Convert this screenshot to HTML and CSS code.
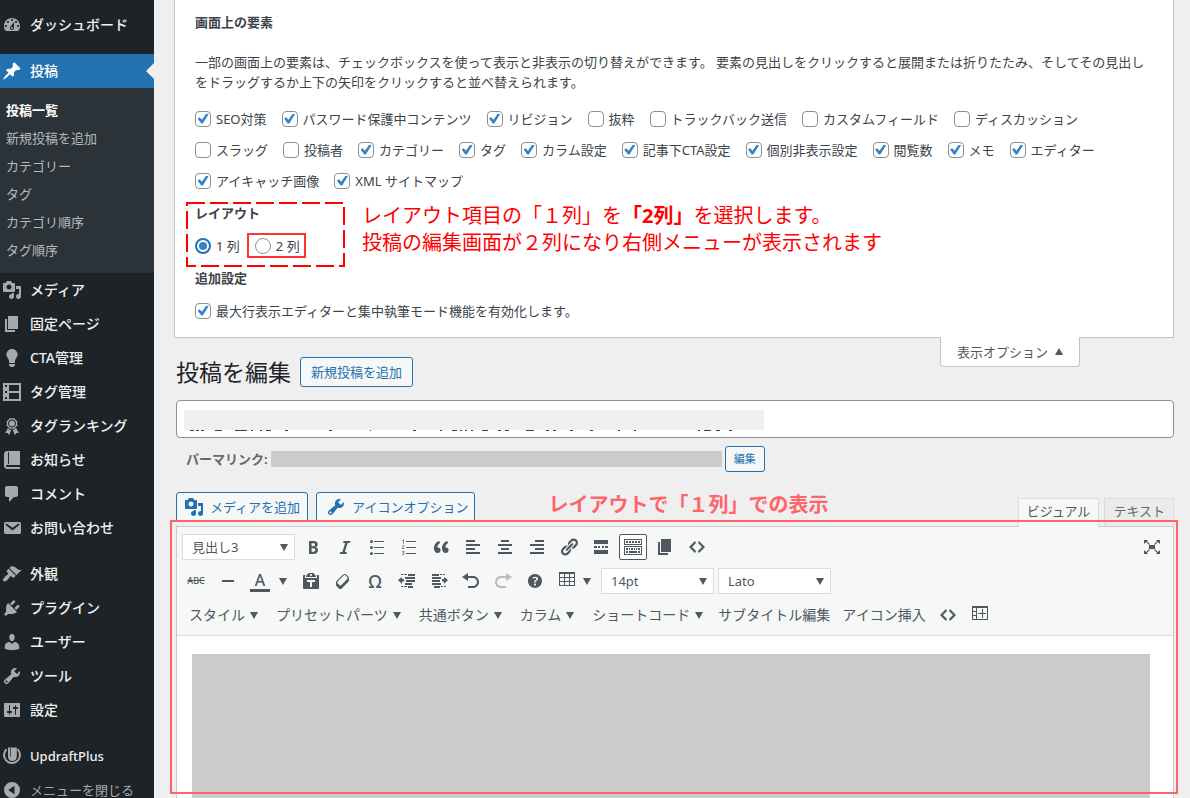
FILE: index.html
```html
<!DOCTYPE html>
<html lang="ja">
<head>
<meta charset="utf-8">
<title>投稿を編集</title>
<meta name="viewport" content="width=device-width, initial-scale=1">
<link rel="stylesheet" href="styles.css">
</head>
<body>
<svg class="sprite" aria-hidden="true">
  <symbol id="dashboard" viewBox="0 0 20 20"><path d="M3.76 16h12.48c1.1-1.37 1.76-3.11 1.76-5 0-4.42-3.58-8-8-8s-8 3.58-8 8c0 1.89.66 3.63 1.76 5zM10 4c.55 0 1 .45 1 1s-.45 1-1 1-1-.45-1-1 .45-1 1-1zM6 6c.55 0 1 .45 1 1s-.45 1-1 1-1-.45-1-1 .45-1 1-1zm8 0c.55 0 1 .45 1 1s-.45 1-1 1-1-.45-1-1 .45-1 1-1zm-5.37 5.55L12 7v6c0 1.1-.9 2-2 2s-2-.9-2-2c0-.57.24-1.08.63-1.45zM4 10c.55 0 1 .45 1 1s-.45 1-1 1-1-.45-1-1 .45-1 1-1zm12 0c.55 0 1 .45 1 1s-.45 1-1 1-1-.45-1-1 .45-1 1-1zm-5 3c0-.55-.45-1-1-1s-1 .45-1 1 .45 1 1 1 1-.45 1-1z"/></symbol>
  <symbol id="pin" viewBox="0 0 20 20"><path d="M10.44 3.02l1.82-1.82 6.36 6.35-1.83 1.82c-1.05-.68-2.48-.57-3.41.36l-.75.75c-.92.93-1.04 2.35-.35 3.41l-1.83 1.82-2.41-2.41-2.8 2.79c-.42.42-3.38 2.71-3.8 2.29s1.86-3.39 2.28-3.81l2.79-2.79L4.1 9.36l1.83-1.82c1.05.69 2.48.57 3.4-.36l.75-.75c.93-.92 1.05-2.35.36-3.41z"/></symbol>
  <symbol id="media" viewBox="0 0 20 20"><path d="M13 11V4c0-.55-.45-1-1-1h-1.67L9 1H5L3.67 3H2c-.55 0-1 .45-1 1v7c0 .55.45 1 1 1h10c.55 0 1-.45 1-1zM7 4.5c1.38 0 2.5 1.12 2.5 2.5S8.38 9.5 7 9.5 4.5 8.38 4.5 7 5.62 4.5 7 4.5zM14 6h5v10.5c0 1.38-1.12 2.5-2.5 2.5S14 17.88 14 16.5s1.12-2.5 2.5-2.5c.17 0 .34.02.5.05V9h-3V6zm-4 8.05V13h2v3.5c0 1.38-1.12 2.5-2.5 2.5S7 17.88 7 16.5 8.12 14 9.5 14c.17 0 .34.02.5.05z"/></symbol>
  <symbol id="page" viewBox="0 0 20 20"><path d="M6 15V2h10v13H6zm-1 1h8v2H3V5h2v11z"/></symbol>
  <symbol id="bulb" viewBox="0 0 20 20"><path d="M10 1c3.11 0 5.63 2.52 5.63 5.62 0 1.84-2.03 4.58-2.03 4.58-.33.44-.6 1.25-.6 1.8v1c0 .55-.45 1-1 1H8c-.55 0-1-.45-1-1v-1c0-.55-.27-1.36-.6-1.8 0 0-2.02-2.74-2.02-4.58C4.38 3.52 6.89 1 10 1zM7 16.87V16h6v.87c0 .62-.13 1.13-.75 1.13H12c0 .62-.4 1-1.02 1h-2c-.61 0-.98-.38-.98-1h-.25c-.62 0-.75-.51-.75-1.13z"/></symbol>
  <symbol id="frames" viewBox="0 0 20 20"><path fill-rule="evenodd" d="M1 1h18v18H1zM7 3v6h10V3zM7 11v6h10v-6zM3 3v2h2V3zM3 9v2h2V9zM3 15v2h2v-2z"/></symbol>
  <symbol id="award" viewBox="0 0 20 20"><path d="M4.46 5.16L5 7.46l-.54 2.29 2.01 1.24L7.7 13l2.3-.54 2.3.54 1.23-2.01 2.01-1.24L15 7.46l.54-2.3-2-1.24-1.24-2.01-2.3.55-2.29-.54-1.25 2zm5.55 6.34c-2.21 0-4-1.79-4-4 0-2.2 1.79-4 4-4 2.2 0 4 1.8 4 4 0 2.21-1.8 4-4 4zm-.02-1C8.33 10.5 7 9.16 7 7.5c0-1.65 1.33-3 2.99-3S13 5.85 13 7.5c0 1.66-1.35 3-3.01 3zm3.84 1.1l-1.28 2.24-2.08-.47L13 19.2l1.4-2.2h2.5zm-7.7.07l1.25 2.25 2.13-.51L7 19.2 5.6 17H3.1z"/></symbol>
  <symbol id="book" viewBox="0 0 20 20"><path d="M5 17h13v2H5c-1.66 0-3-1.34-3-3V4c0-1.66 1.34-3 3-3h13v14H5c-.55 0-1 .45-1 1s.45 1 1 1zm2-3.5v-11c0-.28-.22-.5-.5-.5s-.5.22-.5.5v11c0 .28.22.5.5.5s.5-.22.5-.5z"/></symbol>
  <symbol id="comment" viewBox="0 0 20 20"><path d="M5 2h9c1.1 0 2 .9 2 2v7c0 1.1-.9 2-2 2h-2l-5 5v-5H5c-1.1 0-2-.9-2-2V4c0-1.1.9-2 2-2z"/></symbol>
  <symbol id="mail" viewBox="0 0 20 20"><path d="M3.87 4h13.25C18.37 4 19 4.59 19 5.79v8.42c0 1.19-.63 1.79-1.88 1.79H3.87c-1.25 0-1.88-.6-1.88-1.79V5.79c0-1.2.63-1.79 1.88-1.79zm6.62 8.6l6.74-5.53c.24-.2.43-.66.13-1.07-.29-.41-.82-.42-1.17-.17l-5.7 3.86L4.8 5.83c-.35-.25-.88-.24-1.17.17-.3.41-.11.87.13 1.07z"/></symbol>
  <symbol id="brush" viewBox="0 0 20 20"><path d="M14.48 11.06L7.41 3.99l1.5-1.5c.5-.56 2.3-.47 3.51.32 1.21.8 1.43 1.28 2.91 2.1 1.18.64 2.45 1.26 4.45.85zm-.71.71L6.7 4.7 4.93 6.47c-.39.39-.39 1.02 0 1.41l1.06 1.06c.39.39.39 1.03 0 1.42-.6.6-1.43 1.11-2.21 1.69-.35.26-.7.53-1.01.84C1.43 14.23.4 16.08 1.4 17.07c.99 1 2.84-.03 4.18-1.36.31-.31.58-.66.85-1.02.57-.78 1.08-1.61 1.69-2.21.39-.39 1.02-.39 1.41 0l1.06 1.06c.39.39 1.02.39 1.41 0z"/></symbol>
  <symbol id="plug" viewBox="0 0 20 20"><path d="M13.11 4.36L9.87 7.6 8 5.73l3.24-3.24c.35-.34 1.05-.2 1.56.32.52.51.66 1.21.31 1.55zm-8 1.77l.91-1.12 9.01 9.01-1.19.84c-.71.71-2.63 1.16-3.82 1.16H6.14L4.9 17.26c-.59.59-1.54.59-2.12 0-.59-.58-.59-1.53 0-2.12l1.24-1.24v-3.88c0-1.13.4-3.19 1.09-3.89zm7.26 3.97l3.24-3.24c.34-.35 1.04-.21 1.55.31.52.51.66 1.21.31 1.55l-3.24 3.25z"/></symbol>
  <symbol id="user" viewBox="0 0 20 20"><path d="M10 9.25c-2.27 0-2.73-3.44-2.73-3.44C7 4.02 7.82 2 9.97 2c2.16 0 2.98 2.02 2.71 3.81 0 0-.41 3.44-2.68 3.44zm0 2.57L12.72 10c2.39 0 4.52 2.33 4.52 4.53v2.49s-3.65 1.13-7.24 1.13c-3.65 0-7.24-1.13-7.24-1.13v-2.49c0-2.25 1.94-4.48 4.47-4.48z"/></symbol>
  <symbol id="wrench" viewBox="0 0 20 20"><path d="M16.68 9.77c-1.34 1.34-3.3 1.67-4.95.99l-5.41 6.52c-.99.99-2.59.99-3.58 0s-.99-2.59 0-3.57l6.52-5.42c-.68-1.65-.35-3.61.99-4.95 1.28-1.28 3.12-1.62 4.72-1.06l-2.89 2.89 2.82 2.82 2.86-2.87c.53 1.58.18 3.39-1.08 4.65zM3.81 16.21c.4.39 1.04.39 1.43 0 .4-.4.4-1.04 0-1.43-.39-.4-1.03-.4-1.43 0-.39.39-.39 1.03 0 1.43z"/></symbol>
  <symbol id="sliders" viewBox="0 0 20 20"><path d="M18 16V4c0-.55-.45-1-1-1H3c-.55 0-1 .45-1 1v12c0 .55.45 1 1 1h14c.55 0 1-.45 1-1zM8 11h1c.55 0 1 .45 1 1s-.45 1-1 1H8v1.5c0 .28-.22.5-.5.5s-.5-.22-.5-.5V13H6c-.55 0-1-.45-1-1s.45-1 1-1h1V5.5c0-.28.22-.5.5-.5s.5.22.5.5V11zm5-2h-1c-.55 0-1-.45-1-1s.45-1 1-1h1V5.500c0-.28.22-.5.5-.5s.5.22.5.5V7h1c.55 0 1 .45 1 1s-.45 1-1 1h-1v5.500c0 .28-.22.5-.5.5s-.5-.22-.5-.5V9z"/></symbol>
  <symbol id="updraft" viewBox="0 0 20 20"><path d="M4.500 3.200A8 8 0 1 0 15.500 3.200" fill="none" stroke="currentColor" stroke-width="2"/><path fill-rule="evenodd" d="M6 1.500h8.800v9.300c0 5.700-8.800 5.700-8.800 0zM8 2v8.500c0 .8.700.8.700 0V2z"/></symbol>
  <symbol id="collapse" viewBox="0 0 20 20"><path fill-rule="evenodd" d="M10 2a8 8 0 1 0 0 16 8 8 0 1 0 0-16zM12.500 5.800v8.400L6.300 10z"/></symbol>

  <symbol id="bold" viewBox="0 0 20 20"><path d="M6 4v13h4.540c1.370 0 2.460-.33 3.260-1 .8-.66 1.200-1.580 1.200-2.770 0-.84-.17-1.510-.51-2.010s-.9-.85-1.670-1.030v-.09c.57-.1 1.020-.4 1.360-.9s.51-1.130.51-1.910c0-1.140-.39-1.980-1.170-2.500C12.750 4.260 11.500 4 9.780 4H6zm2.570 5.150V6.260h1.360c.73 0 1.270.11 1.610.32.34.22.51.58.51 1.070 0 .54-.16.92-.47 1.150s-.82.35-1.510.35h-1.500zm0 2.190h1.600c1.440 0 2.160.53 2.160 1.610 0 .6-.17 1.050-.51 1.340s-.86.43-1.570.43H8.570v-3.380z"/></symbol>
  <symbol id="italic" viewBox="0 0 20 20"><path d="M14.780 6h-2.130l-2.800 9h2.120l-.62 2H4.600l.62-2h2.140l2.800-9H8.030l.62-2h6.750z"/></symbol>
  <symbol id="ul" viewBox="0 0 20 20"><path d="M7 4h10v1H7zM7 10h10v1H7zM7 16h10v1H7z"/><circle cx="4.500" cy="4.500" r="1.500"/><circle cx="4.500" cy="10.500" r="1.500"/><circle cx="4.500" cy="16.500" r="1.500"/></symbol>
  <symbol id="ol" viewBox="0 0 20 20"><path d="M7 4h10v1H7zM7 10h10v1H7zM7 16h10v1H7z"/><path d="M3.500 3.500l1-.7V6.500M3.300 8.900c.5-.8 1.900-.6 1.700.4-.1.600-1.700 1.600-1.700 2.200h2M3.300 14.600h1.800l-1 1.400c1.700 0 1.400 2.200-.9 1.600" fill="none" stroke="currentColor" stroke-width=".8"/></symbol>
  <symbol id="quote" viewBox="0 0 20 20"><path d="M9.490 13.220c0-.74-.2-1.380-.61-1.900-.62-.78-1.830-.88-2.530-.72-.29-1.650 1.110-3.750 2.920-4.650L7.880 4c-2.730 1.300-5.420 4.280-4.960 8.050C3.210 14.430 4.590 16 6.540 16c.85 0 1.560-.25 2.120-.75s.83-1.180.83-2.030zm8.050 0c0-.74-.2-1.380-.61-1.900-.63-.78-1.830-.88-2.530-.72-.29-1.650 1.110-3.750 2.920-4.650L15.930 4c-2.730 1.300-5.410 4.280-4.950 8.050.29 2.380 1.660 3.950 3.610 3.950.85 0 1.560-.25 2.120-.75s.83-1.180.83-2.030z"/></symbol>
  <symbol id="left" viewBox="0 0 20 20"><path d="M3 3h9v2H3zM3 7h14v2H3zM3 11h9v2H3zM3 15h14v2H3z"/></symbol>
  <symbol id="center" viewBox="0 0 20 20"><path d="M6 3h8v2H6zM3 7h14v2H3zM6 11h8v2H6zM3 15h14v2H3z"/></symbol>
  <symbol id="right" viewBox="0 0 20 20"><path d="M8 3h9v2H8zM3 7h14v2H3zM8 11h9v2H8zM3 15h14v2H3z"/></symbol>
  <symbol id="link" viewBox="0 0 20 20"><path d="M17.740 2.760c1.680 1.690 1.680 4.410 0 6.100l-1.530 1.520c-1.120 1.120-2.700 1.470-4.140 1.090l2.620-2.610.76-.77.76-.76c.84-.84.84-2.200 0-3.040-.84-.85-2.200-.85-3.040 0l-.77.76-3.380 3.380c-.37-1.440-.02-3.020 1.100-4.140l1.520-1.530c1.690-1.680 4.420-1.680 6.100 0zM8.590 13.430l5.340-5.340c.42-.42.42-1.100 0-1.520-.44-.43-1.130-.39-1.530 0l-5.330 5.340c-.42.42-.42 1.100 0 1.520.44.43 1.130.39 1.520 0zm-.76 2.290l4.140-4.150c.38 1.440.03 3.020-1.090 4.140l-1.520 1.530c-1.690 1.680-4.410 1.680-6.100 0-1.680-1.680-1.680-4.420 0-6.100l1.530-1.520c1.120-1.120 2.700-1.470 4.140-1.100l-4.140 4.150c-.85.84-.85 2.200 0 3.050.84.84 2.200.84 3.040 0z"/></symbol>
  <symbol id="more" viewBox="0 0 20 20"><path d="M3 3h14v4H3zM3 9h3v2H3zM7 9h2v2H7zM11 9h2v2h-2zM14 9h3v2h-3zM3 13h14v4H3z"/></symbol>
  <symbol id="keyboard" viewBox="0 0 20 20"><path fill-rule="evenodd" d="M1 2h18v6H1zM2 3v4h16V3zM1 9h18v9H1zM2 10v7h16v-7z"/><path d="M3 4h2v2H3zM6 4h2v2H6zM9 4h2v2H9zM12 4h2v2h-2zM15 4h2v2h-2zM3 11h2v2H3zM6 11h1v2H6zM8 11h2v2H8zM11 11h1v2h-1zM13 11h1v2h-1zM15 11h2v2h-2zM3 14h2v2H3zM6 14h8v2H6zM15 14h2v2h-2z"/></symbol>
  <symbol id="code" viewBox="0 0 20 20"><path d="M9 6l-4 4 4 4-1 2-6-6 6-6zm2 8l4-4-4-4 1-2 6 6-6 6z"/></symbol>
  <symbol id="expand" viewBox="0 0 20 20"><path d="M7 8h6v4H7zM2 3h4L4.900 4.200l3 2.900-.8.8-3-2.900L2 7zM18 3h-4l1.100 1.200-3 2.900.8.800 3-2.900L18 7zM2 17h4l-1.100-1.200 3-2.900-.8-.8-3 2.900L2 13zM18 17h-4l1.100-1.200-3-2.900.8-.8 3 2.900L18 13z"/></symbol>
  <symbol id="minus" viewBox="0 0 20 20"><path d="M4 9h12v2H4z"/></symbol>
  <symbol id="paste" viewBox="0 0 20 20"><path d="M12.380 2L15 5v1H5V5l2.640-3h4.740zM10 5c.55 0 1-.44 1-1 0-.55-.45-1-1-1s-1 .45-1 1c0 .56.45 1 1 1zm5.450-1H17c.55 0 1 .45 1 1v12c0 .56-.45 1-1 1H3c-.55 0-1-.44-1-1V5c0-.55.45-1 1-1h1.550L4 4.630V7h12V4.630zM14 11V9H6v2h3v5h2v-5h3z"/></symbol>
  <symbol id="eraser" viewBox="0 0 20 20"><path d="M14.290 4.590l1.100 1.110c.41.4.61.94.61 1.470v2.120c0 .53-.2 1.070-.61 1.470l-6.630 6.630c-.4.41-.94.61-1.470.61s-1.070-.2-1.470-.61l-1.110-1.100-1.100-1.110c-.41-.4-.61-.94-.61-1.470v-2.120c0-.54.2-1.070.61-1.480l6.630-6.620c.4-.41.94-.61 1.470-.61s1.060.2 1.470.61zm-6.210 9.700l6.420-6.420c.39-.39.39-1.030 0-1.430L12.360 4.300c-.19-.19-.45-.29-.72-.29s-.52.1-.71.29l-6.420 6.420c-.39.4-.39 1.040 0 1.430l2.140 2.140c.38.38 1.040.38 1.430 0z"/></symbol>
  <symbol id="outdent" viewBox="0 0 20 20"><path d="M7 3h3v1H7zM11 3h7v2h-7zM4 3h2v1H4zM8 6h10v2H8zM9 9h9v2H9zM8 12h7v2H8zM4 15h2v1H4zM7 15h3v1H7zM11 15h5v2h-5zM1 9l4-3v2h2v2.500H5V13z"/></symbol>
  <symbol id="indent" viewBox="0 0 20 20"><path d="M3 3h7v2H3zM11 3h2v1h-2zM14 3h2v1h-2zM3 6h9v2H3zM3 9h8v2H3zM3 12h9v2H3zM5 15h6v2H5zM12 15h2v1h-2zM15 15h2v1h-2zM19 9l-4-3v2h-2v2.500h2V13z"/></symbol>
  <symbol id="undo" viewBox="0 0 20 20"><path d="M12 5H7V2L1 6l6 4V7h5c2.200 0 4 1.800 4 4s-1.800 4-4 4H7v2h5c3.300 0 6-2.700 6-6s-2.700-6-6-6z"/></symbol>
  <symbol id="redo" viewBox="0 0 20 20"><path d="M8 5h5V2l6 4-6 4V7H8c-2.200 0-4 1.800-4 4s1.800 4 4 4h5v2H8c-3.300 0-6-2.700-6-6s2.700-6 6-6z"/></symbol>
  <symbol id="help" viewBox="0 0 20 20"><path d="M17 10c0-3.870-3.140-7-7-7-3.870 0-7 3.130-7 7s3.130 7 7 7c3.860 0 7-3.130 7-7zm-6.300 1.480H9.140v-.43c0-.38.08-.7.24-.98s.46-.57.88-.89c.41-.29.68-.53.81-.71.14-.18.2-.39.2-.62 0-.25-.09-.44-.28-.58-.19-.13-.45-.19-.79-.19-.58 0-1.250.19-2 .57l-.64-1.280c.87-.49 1.800-.74 2.770-.74.81 0 1.450.2 1.920.58.48.39.71.91.71 1.550 0 .43-.09.8-.29 1.110-.19.32-.57.67-1.110 1.060-.38.28-.61.49-.71.63-.1.15-.15.34-.15.57v.35zm-1.470 2.740c-.18-.17-.27-.42-.27-.73 0-.33.08-.58.26-.75s.43-.25.77-.25c.32 0 .57.09.75.26s.27.42.27.74c0 .3-.09.55-.27.72-.18.18-.43.27-.75.27-.33 0-.58-.09-.76-.26z"/></symbol>
  <symbol id="table" viewBox="0 0 20 20"><path fill-rule="evenodd" d="M2 1h16v14H2zM3 3v3h4V3zM8 3v3h4V3zM13 3v3h4V3zM3 7v3h4V7zM8 7v3h4V7zM13 7v3h4V7zM3 11v3h4v-3zM8 11v3h4v-3zM13 11v3h4v-3z"/></symbol>
  <symbol id="addtable" viewBox="0 0 20 20"><path fill-rule="evenodd" d="M2 1h16v14H2zM3 3v3h3V3zM3 7v3h3V7zM3 11v3h3v-3zM7 3v11h10V3z"/><path d="M8 8h8v1H8zM12 4h1v9h-1z"/></symbol>
</svg>

<div class="shell">
  <nav class="menu" aria-label="メインメニュー">
    <ul class="menu-list">
      <li><a class="menu-link" href="#"><svg class="icon"><use href="#dashboard"/></svg>ダッシュボード</a></li>
      <li class="menu-group">
        <a class="menu-link current" href="#"><svg class="icon"><use href="#pin"/></svg>投稿</a>
        <ul class="submenu">
          <li><a class="submenu-link active" href="#">投稿一覧</a></li>
          <li><a class="submenu-link" href="#">新規投稿を追加</a></li>
          <li><a class="submenu-link" href="#">カテゴリー</a></li>
          <li><a class="submenu-link" href="#">タグ</a></li>
          <li><a class="submenu-link" href="#">カテゴリ順序</a></li>
          <li><a class="submenu-link" href="#">タグ順序</a></li>
        </ul>
      </li>
      <li><a class="menu-link" href="#"><svg class="icon"><use href="#media"/></svg>メディア</a></li>
      <li><a class="menu-link" href="#"><svg class="icon"><use href="#page"/></svg>固定ページ</a></li>
      <li><a class="menu-link" href="#"><svg class="icon"><use href="#bulb"/></svg>CTA管理</a></li>
      <li><a class="menu-link" href="#"><svg class="icon"><use href="#frames"/></svg>タグ管理</a></li>
      <li><a class="menu-link" href="#"><svg class="icon"><use href="#award"/></svg>タグランキング</a></li>
      <li><a class="menu-link" href="#"><svg class="icon"><use href="#book"/></svg>お知らせ</a></li>
      <li><a class="menu-link" href="#"><svg class="icon"><use href="#comment"/></svg>コメント</a></li>
      <li><a class="menu-link" href="#"><svg class="icon"><use href="#mail"/></svg>お問い合わせ</a></li>
      <li class="menu-group"><a class="menu-link" href="#"><svg class="icon"><use href="#brush"/></svg>外観</a></li>
      <li><a class="menu-link" href="#"><svg class="icon"><use href="#plug"/></svg>プラグイン</a></li>
      <li><a class="menu-link" href="#"><svg class="icon"><use href="#user"/></svg>ユーザー</a></li>
      <li><a class="menu-link" href="#"><svg class="icon"><use href="#wrench"/></svg>ツール</a></li>
      <li><a class="menu-link" href="#"><svg class="icon"><use href="#sliders"/></svg>設定</a></li>
      <li class="menu-group"><a class="menu-link latin" href="#"><svg class="icon"><use href="#updraft"/></svg>UpdraftPlus</a></li>
      <li><button class="menu-link collapse" type="button"><svg class="icon"><use href="#collapse"/></svg>メニューを閉じる</button></li>
    </ul>
  </nav>

  <main class="main">
    <section class="options">
      <h2 class="options-title">画面上の要素</h2>
      <p class="options-text">一部の画面上の要素は、チェックボックスを使って表示と非表示の切り替えができます。 要素の見出しをクリックすると展開または折りたたみ、そしてその見出しをドラッグするか上下の矢印をクリックすると並べ替えられます。</p>
      <div class="choices">
        <label class="choice"><input class="check" type="checkbox" checked>SEO対策</label>
        <label class="choice"><input class="check" type="checkbox" checked>パスワード保護中コンテンツ</label>
        <label class="choice"><input class="check" type="checkbox" checked>リビジョン</label>
        <label class="choice"><input class="check" type="checkbox">抜粋</label>
        <label class="choice"><input class="check" type="checkbox">トラックバック送信</label>
        <label class="choice"><input class="check" type="checkbox">カスタムフィールド</label>
        <label class="choice"><input class="check" type="checkbox">ディスカッション</label>
        <label class="choice"><input class="check" type="checkbox">スラッグ</label>
        <label class="choice"><input class="check" type="checkbox">投稿者</label>
        <label class="choice"><input class="check" type="checkbox" checked>カテゴリー</label>
        <label class="choice"><input class="check" type="checkbox" checked>タグ</label>
        <label class="choice"><input class="check" type="checkbox" checked>カラム設定</label>
        <label class="choice"><input class="check" type="checkbox" checked>記事下CTA設定</label>
        <label class="choice"><input class="check" type="checkbox" checked>個別非表示設定</label>
        <label class="choice"><input class="check" type="checkbox" checked>閲覧数</label>
        <label class="choice"><input class="check" type="checkbox" checked>メモ</label>
        <label class="choice"><input class="check" type="checkbox" checked>エディター</label>
        <label class="choice"><input class="check" type="checkbox" checked>アイキャッチ画像</label>
        <label class="choice"><input class="check" type="checkbox" checked>XML サイトマップ</label>
      </div>
      <div class="layout">
        <h2 class="options-title">レイアウト</h2>
        <div class="choices">
          <label class="choice"><input class="radio" type="radio" name="columns" checked>1 列</label>
          <label class="choice marked"><input class="radio" type="radio" name="columns">2 列</label>
        </div>
        <svg class="dashes" aria-hidden="true"><rect x="1" y="1" width="157" height="63"/></svg>
        <p class="note">レイアウト項目の「１列」を<b>「2列」</b>を選択します。<br>投稿の編集画面が２列になり右側メニューが表示されます</p>
      </div>
      <h2 class="options-title">追加設定</h2>
      <div class="choices">
        <label class="choice"><input class="check" type="checkbox" checked>最大行表示エディターと集中執筆モード機能を有効化します。</label>
      </div>
    </section>

    <div class="heading">
      <div class="heading-title">
        <h1 class="title">投稿を編集</h1>
        <a class="btn" href="#">新規投稿を追加</a>
      </div>
      <button class="options-toggle" type="button">表示オプション<span class="caret up"></span></button>
    </div>

    <div class="post">
      <div class="title-field">
        <input class="title-input" type="text" aria-label="タイトル">
        <svg class="title-mask" viewBox="0 0 580 22" aria-hidden="true">
          <path class="mask-fill" d="M0 0h580v20H0z"/>
          <path class="mask-ink" d="M6 20.500h4M12 20.500h3M17 20.500h3M31 20.500h7M51 20.500h12M67 20.500h2M76 20.500h2M82 20.500h5M101 20.500h3M145 20.500h3M186 20.500h1M229 20.500h3M256 20.500h2M268 20.500h5M276 20.500h2M281 20.500h2M287 20.500h2M298 20.500h6M314 20.500h3M321 20.500h4M342 20.500h8M362 20.500h3M369 20.500h3M386 20.500h3M406 20.500h3M434 20.500h2M450 20.500h2M514 20.500h2M520 20.500h7M532 20.500h4M545 20.500h3"/>
        </svg>
      </div>

      <div class="permalink">
        <strong>パーマリンク:</strong>
        <span class="permalink-mask"></span>
        <button class="btn small" type="button">編集</button>
      </div>

      <div class="editor-head">
        <button class="btn media" type="button"><svg class="icon"><use href="#media"/></svg>メディアを追加</button>
        <button class="btn media wide" type="button"><svg class="icon"><use href="#wrench"/></svg>アイコンオプション</button>
        <p class="caption">レイアウトで「１列」での表示</p>
        <div class="tabs">
          <button class="tab selected" type="button">ビジュアル</button>
          <button class="tab" type="button">テキスト</button>
        </div>
      </div>

      <div class="editor">
        <div class="toolbar">
          <div class="tools">
            <span class="picker"><select class="picker-select" aria-label="段落"><option>見出し3</option></select><span class="caret"></span></span>
            <button class="tool" type="button" aria-label="太字"><svg class="icon"><use href="#bold"/></svg></button>
            <button class="tool" type="button" aria-label="イタリック"><svg class="icon"><use href="#italic"/></svg></button>
            <button class="tool" type="button" aria-label="番号なしリスト"><svg class="icon"><use href="#ul"/></svg></button>
            <button class="tool" type="button" aria-label="番号付きリスト"><svg class="icon"><use href="#ol"/></svg></button>
            <button class="tool" type="button" aria-label="引用"><svg class="icon"><use href="#quote"/></svg></button>
            <button class="tool" type="button" aria-label="左寄せ"><svg class="icon"><use href="#left"/></svg></button>
            <button class="tool" type="button" aria-label="中央揃え"><svg class="icon"><use href="#center"/></svg></button>
            <button class="tool" type="button" aria-label="右寄せ"><svg class="icon"><use href="#right"/></svg></button>
            <button class="tool" type="button" aria-label="リンク"><svg class="icon"><use href="#link"/></svg></button>
            <button class="tool" type="button" aria-label="続きを読む"><svg class="icon"><use href="#more"/></svg></button>
            <button class="tool pressed" type="button" aria-label="ツールバー切り替え"><svg class="icon"><use href="#keyboard"/></svg></button>
            <button class="tool" type="button" aria-label="改ページ"><svg class="icon"><use href="#page"/></svg></button>
            <button class="tool" type="button" aria-label="ソースコード"><svg class="icon"><use href="#code"/></svg></button>
            <button class="tool last" type="button" aria-label="集中執筆モード"><svg class="icon"><use href="#expand"/></svg></button>
          </div>
          <div class="tools">
            <button class="tool strike" type="button">ABC</button>
            <button class="tool" type="button" aria-label="横ライン"><svg class="icon"><use href="#minus"/></svg></button>
            <button class="tool split color" type="button"><span class="letter">A</span><span class="caret"></span></button>
            <button class="tool" type="button" aria-label="テキストとしてペースト"><svg class="icon"><use href="#paste"/></svg></button>
            <button class="tool" type="button" aria-label="書式設定をクリア"><svg class="icon"><use href="#eraser"/></svg></button>
            <button class="tool omega" type="button">Ω</button>
            <button class="tool" type="button" aria-label="インデントを減らす"><svg class="icon"><use href="#outdent"/></svg></button>
            <button class="tool" type="button" aria-label="インデントを増やす"><svg class="icon"><use href="#indent"/></svg></button>
            <button class="tool" type="button" aria-label="取り消し"><svg class="icon"><use href="#undo"/></svg></button>
            <button class="tool" type="button" aria-label="やり直し" disabled><svg class="icon"><use href="#redo"/></svg></button>
            <button class="tool" type="button" aria-label="ヘルプ"><svg class="icon"><use href="#help"/></svg></button>
            <button class="tool split" type="button" aria-label="テーブル"><svg class="icon"><use href="#table"/></svg><span class="caret"></span></button>
            <span class="picker"><select class="picker-select" aria-label="フォントサイズ"><option>14pt</option></select><span class="caret"></span></span>
            <span class="picker"><select class="picker-select" aria-label="フォント"><option>Lato</option></select><span class="caret"></span></span>
          </div>
          <div class="tools">
            <button class="tool drop" type="button">スタイル<span class="caret"></span></button>
            <button class="tool drop" type="button">プリセットパーツ<span class="caret"></span></button>
            <button class="tool drop" type="button">共通ボタン<span class="caret"></span></button>
            <button class="tool drop" type="button">カラム<span class="caret"></span></button>
            <button class="tool drop" type="button">ショートコード<span class="caret"></span></button>
            <button class="tool text" type="button">サブタイトル編集</button>
            <button class="tool text" type="button">アイコン挿入</button>
            <button class="tool" type="button" aria-label="コード"><svg class="icon"><use href="#code"/></svg></button>
            <button class="tool" type="button" aria-label="テーブルを挿入"><svg class="icon"><use href="#addtable"/></svg></button>
          </div>
        </div>
        <div class="canvas"><div class="canvas-mask"></div></div>
        <div class="frame"></div>
      </div>
    </div>
  </main>
</div>
</body>
</html>
```

FILE: styles.css
```css
* { box-sizing: border-box; }

body {
  margin: 0;
  background: #efefef;
  color: #3c434a;
  font: 13px/20px "Noto Sans", "Noto Sans CJK JP", sans-serif;
}

h1, h2, p, ul { margin: 0; padding: 0; }
ul { list-style: none; }
a { text-decoration: none; }
button, input, select { font: inherit; color: inherit; margin: 0; }
button { cursor: pointer; white-space: nowrap; }

.sprite { position: absolute; width: 0; height: 0; }
.icon { flex: none; width: 20px; height: 20px; fill: currentColor; }

.caret {
  flex: none;
  border: 4px solid transparent;
  border-top: 7px solid #50575e;
  border-bottom: 0;
}
.caret.up {
  border-top: 0;
  border-bottom: 7px solid #50575e;
}

.shell {
  display: flex;
  height: 100vh;
  overflow: hidden;
}

/* Sidebar */
.menu {
  flex: none;
  width: 154px;
  padding-top: 8px;
  background: #1d2327;
}
.menu-group { margin-top: 12px; }
.menu-link {
  position: relative;
  display: flex;
  align-items: center;
  gap: 8px;
  width: 100%;
  height: 34px;
  padding: 0 2px;
  border: 0;
  background: none;
  color: #f0f0f1;
  font-size: 14px;
  font-weight: 500;
  white-space: nowrap;
}
.menu-link .icon { color: #a7aaad; }
.menu-link.current { background: #2271b1; color: #fff; }
.menu-link.current .icon { color: #fff; }
.menu-link.current::after {
  content: "";
  position: absolute;
  right: 0;
  border: 8px solid transparent;
  border-left: 0;
  border-right-color: #efefef;
}
.menu-link.latin { font-size: 13px; }
.menu-link.collapse { color: #a7aaad; font-size: 13px; font-weight: 400; }
.submenu { padding: 8px 0 9px; background: #2c3338; }
.submenu-link {
  display: block;
  padding: 0 6px;
  color: #b4b9be;
  line-height: 28px;
}
.submenu-link.active { color: #fff; font-weight: 700; }

/* Screen options */
.main {
  display: flex;
  flex: 1;
  flex-direction: column;
  min-width: 0;
  padding: 0 16px 0 20px;
}
.options {
  padding: 12px 20px 11px;
  border: 1px solid #c3c4c7;
  border-top: 0;
  background: #fff;
}
.options-title { font-size: 13px; font-weight: 700; }
.options-text { margin: 20px 0 11px; }
.choices { display: flex; flex-wrap: wrap; column-gap: 15px; }
.choice {
  position: relative;
  display: flex;
  align-items: center;
  gap: 5px;
  height: 31px;
}
.check, .radio {
  display: grid;
  place-items: center;
  width: 16px;
  height: 16px;
  border: 1px solid #8c8f94;
  border-radius: 4px;
  background: #fff;
  appearance: none;
}
.check:checked::before {
  content: "";
  width: 11px;
  height: 10px;
  background: #3582c4;
  clip-path: polygon(0 50%, 20% 38%, 40% 62%, 80% 0, 100% 8%, 48% 100%, 34% 100%);
}
.radio { border-radius: 50%; }
.radio:checked { border: 2px solid #2271b1; }
.radio:checked::before {
  content: "";
  width: 8px;
  height: 8px;
  border-radius: 50%;
  background: #3582c4;
}
.layout { position: relative; padding: 7px 0; }
.layout .choices, .options-title + .choices { margin-top: 7px; }
.marked::after {
  content: "";
  position: absolute;
  inset: 3px -6px 3px -8px;
  border: 2px solid #f33;
}
.dashes {
  position: absolute;
  top: 6px;
  left: -9px;
  width: 159px;
  height: 65px;
  fill: none;
  stroke: #f00;
  stroke-width: 2;
  stroke-dasharray: 18 5;
}
.note {
  position: absolute;
  top: 6px;
  left: 167px;
  color: #f00;
  font-size: 20px;
  line-height: 27px;
  white-space: nowrap;
}

/* Page heading */
.heading {
  display: flex;
  align-items: flex-start;
  justify-content: space-between;
  height: 62px;
  padding: 0 94px 0 2px;
}
.heading-title {
  display: flex;
  align-items: center;
  gap: 9px;
  padding-top: 14px;
}
.title {
  color: #1d2327;
  font-size: 23px;
  font-weight: 400;
  line-height: 40px;
}
.btn {
  display: flex;
  align-items: center;
  height: 30px;
  padding: 0 10px;
  border: 1px solid #2271b1;
  border-radius: 3px;
  background: #f6f7f7;
  color: #2271b1;
}
.btn.small { height: 26px; padding: 0 8px; font-size: 11px; }
.btn.media { gap: 6px; padding: 0 7px; }
.btn.wide { padding: 0 6px 0 9px; }
.options-toggle {
  display: flex;
  align-items: center;
  gap: 7px;
  height: 30px;
  margin-top: -1px;
  padding: 0 16px;
  border: 1px solid #c3c4c7;
  border-top: 0;
  border-radius: 0 0 4px 4px;
  background: #fff;
  color: #50575e;
}

/* Post form */
.post {
  display: flex;
  flex: 1;
  flex-direction: column;
  min-height: 0;
  padding-left: 2px;
}
.title-field { position: relative; }
.title-input {
  display: block;
  width: 100%;
  height: 38px;
  padding: 0 8px;
  border: 1px solid #8c8f94;
  border-radius: 4px;
  background: #fff;
  font-size: 23px;
}
.title-mask {
  position: absolute;
  top: 10px;
  left: 8px;
  width: 580px;
  height: 22px;
}
.mask-fill { fill: #efefef; }
.mask-ink { stroke: #3c434a; stroke-width: 1; }
.permalink {
  display: flex;
  align-items: center;
  gap: 3px;
  padding: 8px 10px 0;
  color: #646970;
}
.permalink-mask { width: 451px; height: 16px; background: #cbcbcb; }
.editor-head {
  display: flex;
  gap: 8px;
  height: 54px;
  padding-top: 20px;
}
.caption {
  margin-left: 65px;
  color: #ff6469;
  font-size: 20px;
  font-weight: 700;
  line-height: 26px;
}
.tabs {
  z-index: 1;
  display: flex;
  align-items: flex-start;
  gap: 5px;
  margin: 6px 0 -1px auto;
}
.tab {
  height: 28px;
  padding: 0 8px 4px;
  border: 1px solid #dcdcde;
  border-bottom: 0;
  background: #ebebeb;
  color: #646970;
}
.tab.selected { height: 29px; background: #f6f7f7; color: #50575e; }

/* Editor */
.editor {
  position: relative;
  display: flex;
  flex: 1;
  flex-direction: column;
  border: 1px solid #c9cbcf;
  border-bottom: 0;
  background: #fff;
}
.toolbar {
  padding: 3px 5px;
  border-bottom: 1px solid #dcdcde;
  background: #f6f7f7;
}
.tools { display: flex; align-items: center; gap: 4px; height: 34px; }
.tool {
  display: flex;
  flex: none;
  align-items: center;
  justify-content: center;
  width: 28px;
  height: 26px;
  padding: 0;
  border: 0;
  background: none;
  color: #50575e;
}
.tool:disabled { color: #b8bbbe; }
.tool.pressed { border: 1px solid #50575e; border-radius: 2px; background: #fff; }
.tool.last { margin-left: auto; margin-right: 2px; }
.tool.strike { font-size: 9px; font-weight: 500; text-decoration: line-through; }
.tool.omega { font-size: 18px; font-weight: 500; }
.tool.split {
  justify-content: flex-start;
  gap: 6px;
  width: 44px;
  padding-left: 4px;
}
.tool.color { gap: 9px; width: 47px; }
.tool.drop, .tool.text {
  gap: 5px;
  width: auto;
  padding: 0 7px;
  font-size: 14px;
}
.tool.text { padding: 0 4px; }
.letter {
  width: 20px;
  border-bottom: 3px solid #50575e;
  font-size: 16px;
  font-weight: 500;
  line-height: 18px;
}
.picker { position: relative; flex: none; width: 113px; height: 26px; }
.picker-select {
  width: 100%;
  height: 100%;
  padding: 0 9px;
  border: 1px solid #dcdcde;
  border-radius: 0;
  background: #fff;
  color: #50575e;
  appearance: none;
}
.picker .caret { position: absolute; top: 10px; right: 7px; pointer-events: none; }
.canvas { display: flex; flex: 1; padding: 18px 23px 0 15px; }
.canvas-mask { flex: 1; background: #cbcbcb; }
.frame {
  position: absolute;
  inset: -7px -5px 4px -7px;
  z-index: 2;
  border: 2px solid #ff6469;
  pointer-events: none;
}
```
